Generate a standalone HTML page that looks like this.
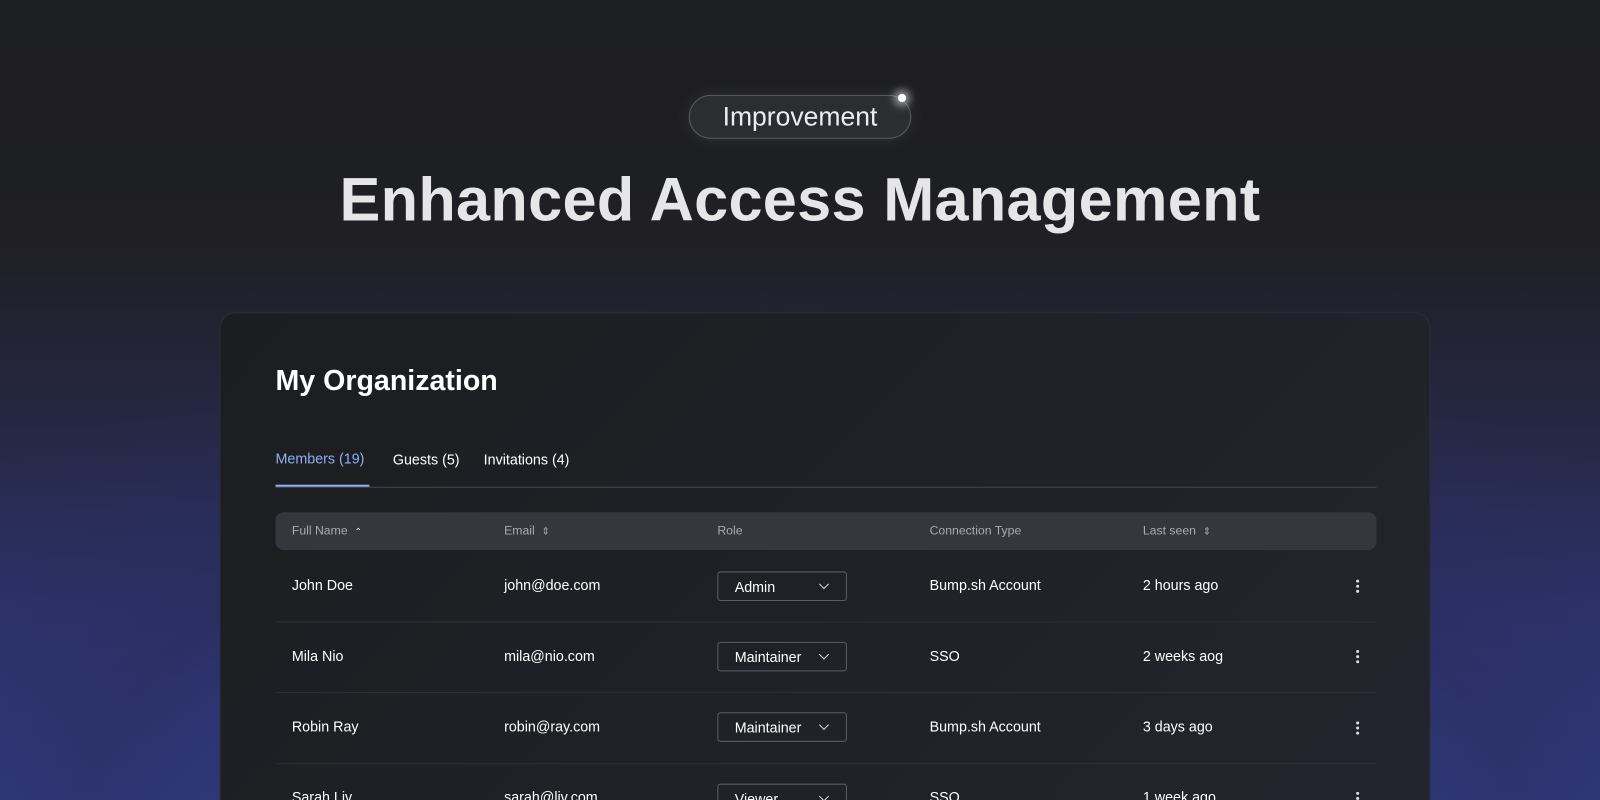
<!DOCTYPE html><html><head><style>
*{margin:0;padding:0;box-sizing:border-box}
html,body{width:1600px;height:800px;overflow:hidden;background:#1d1e20}
body{font-family:"Liberation Sans",sans-serif;position:relative}
.bg{position:absolute;left:0;top:0;width:1600px;height:800px;
background:radial-gradient(ellipse 1100px 520px at 800px 820px,#3a47a0 0%,#323c86 35%,rgba(40,44,90,0.6) 65%,rgba(30,31,35,0) 100%),linear-gradient(180deg,#1d1e20 0%,#1f1f24 30%,#262845 55%,#2e3574 80%,#343f8e 100%)}
.wrap{position:absolute;left:0;top:0;width:1568px;height:784px;overflow:hidden;transform:scale(1.0204);transform-origin:0 0}
.pill{position:absolute;left:675px;top:93px;width:218px;height:43px;border-radius:22px;border:1.5px solid #5a5c62;background:#2c2d31;color:#e8eef4;font-size:26px;text-align:center;line-height:40px;box-shadow:0 0 18px rgba(255,255,255,0.08)}
.star{position:absolute;left:880px;top:92px;width:8px;height:8px;border-radius:50%;background:#fff;box-shadow:0 0 8px 4px rgba(255,255,255,0.5)}
h1{position:absolute;left:0;width:1568px;top:161px;text-align:center;font-size:60px;font-weight:bold;color:#e6e6e6;letter-spacing:0.3px}
.card{position:absolute;left:215px;top:306px;width:1187px;height:478px;overflow:hidden;border-radius:16px 16px 0 0;background:linear-gradient(135deg,#1c1d20,#23252e);border:1px solid #2d2f38;border-bottom:none}
.t{position:absolute;color:#fff;font-size:15px}
.h2{left:54px;top:50px;font-size:28px;font-weight:bold}
.tabs{position:absolute;left:54px;top:170px;width:1079px;border-bottom:1px solid #45474f;height:1px}
.th{position:absolute;left:54px;top:195px;width:1079px;height:37px;border-radius:8px;background:#35373e}
.hc{position:absolute;top:206px;color:#a9abb2;font-size:12px}
.sep{position:absolute;left:54px;width:1079px;height:1px;background:#2f313a}
.sel{position:absolute;width:127px;height:29px;border:1px solid #5b5d65;border-radius:3px;color:#fff;font-size:14px;padding:6px 0 0 16px}
.sel:after{content:"";position:absolute;right:18px;top:8px;width:6px;height:6px;border-right:1.5px solid #ddd;border-bottom:1.5px solid #ddd;transform:rotate(45deg)}
.dots{position:absolute;left:1113px;width:3px;height:3px;background:#ddd;border-radius:50%;box-shadow:0 5px 0 #ddd,0 -5px 0 #ddd}
</style></head><body>
<div class="bg"></div>
<div class="wrap">
<div class="pill">Improvement</div><div class="star"></div>
<h1>Enhanced Access Management</h1>
<div class="card">
<div class="t h2">My Organization</div>
<div class="t" style="left:54px;top:134px;color:#8fb0f0;font-size:14px">Members (19)</div>
<div class="t" style="left:169px;top:135px;font-size:14px">Guests (5)</div>
<div class="t" style="left:258px;top:135px;font-size:14px">Invitations (4)</div>
<div class="tabs"></div>
<div style="position:absolute;left:54px;top:168px;width:92px;height:2px;background:#8fb0f0"></div>
<div class="th"></div>
<div class="hc" style="left:70px">Full Name &nbsp;<span style="color:#fff;font-size:9px">⌃</span></div>
<div class="hc" style="left:278px">Email &nbsp;<span style="font-size:10px">⇕</span></div>
<div class="hc" style="left:487px">Role</div>
<div class="hc" style="left:695px">Connection Type</div>
<div class="hc" style="left:904px">Last seen &nbsp;<span style="font-size:10px">⇕</span></div>

<div class="t" style="left:70px;top:258px;font-size:14px">John Doe</div>
<div class="t" style="left:278px;top:258px;font-size:14px">john@doe.com</div>
<div class="sel" style="left:487px;top:253px">Admin</div>
<div class="t" style="left:695px;top:258px;font-size:14px">Bump.sh Account</div>
<div class="t" style="left:904px;top:258px;font-size:14px">2 hours ago</div>
<div class="dots" style="top:266px"></div>
<div class="sep" style="top:302px"></div>

<div class="t" style="left:70px;top:328px;font-size:14px">Mila Nio</div>
<div class="t" style="left:278px;top:328px;font-size:14px">mila@nio.com</div>
<div class="sel" style="left:487px;top:322px">Maintainer</div>
<div class="t" style="left:695px;top:328px;font-size:14px">SSO</div>
<div class="t" style="left:904px;top:328px;font-size:14px">2 weeks aog</div>
<div class="dots" style="top:335px"></div>
<div class="sep" style="top:371px"></div>

<div class="t" style="left:70px;top:397px;font-size:14px">Robin Ray</div>
<div class="t" style="left:278px;top:397px;font-size:14px">robin@ray.com</div>
<div class="sel" style="left:487px;top:391px">Maintainer</div>
<div class="t" style="left:695px;top:397px;font-size:14px">Bump.sh Account</div>
<div class="t" style="left:904px;top:397px;font-size:14px">3 days ago</div>
<div class="dots" style="top:405px"></div>
<div class="sep" style="top:441px"></div>

<div class="t" style="left:70px;top:466px;font-size:14px">Sarah Liv</div>
<div class="t" style="left:278px;top:466px;font-size:14px">sarah@liv.com</div>
<div class="sel" style="left:487px;top:461px">Viewer</div>
<div class="t" style="left:695px;top:466px;font-size:14px">SSO</div>
<div class="t" style="left:904px;top:466px;font-size:14px">1 week ago</div>
<div class="dots" style="top:474px"></div>
</div>
</div>
</body></html>
